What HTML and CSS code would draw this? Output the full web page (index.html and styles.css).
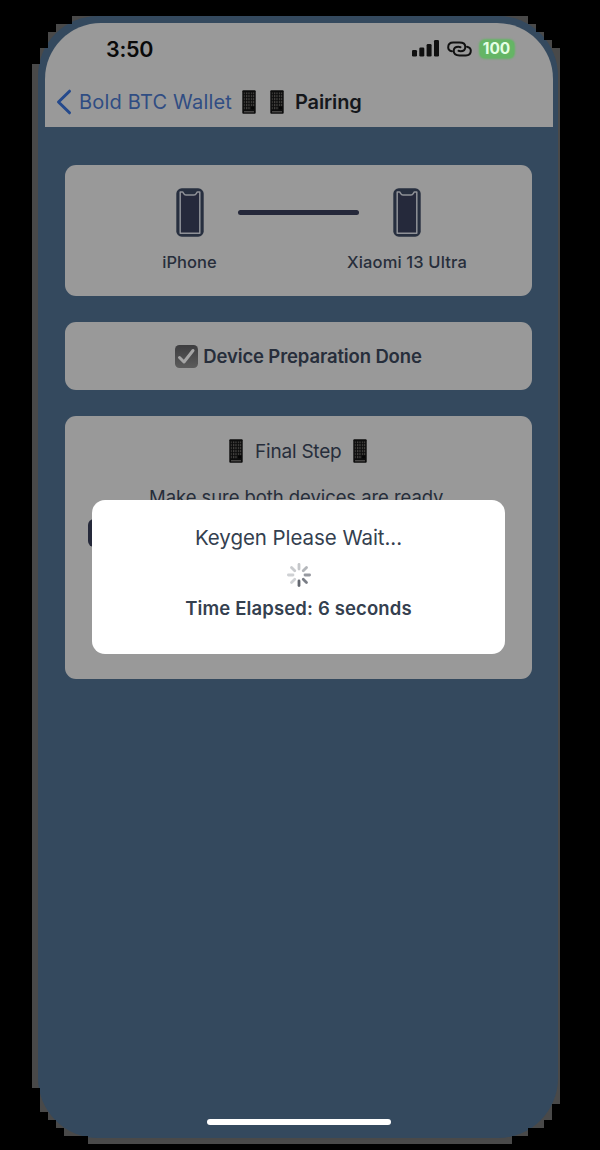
FILE: index.html
```html
<!DOCTYPE html>
<html lang="en">
<head>
<meta charset="utf-8">
<title>Pairing</title>
<link rel="stylesheet" href="styles.css">
</head>
<body>
<svg class="defs" width="0" height="0">
  <defs>
    <pattern id="keys" width="2.4" height="3" patternUnits="userSpaceOnUse" x="1.6" y="2.4">
      <rect width="1.2" height="1.4" fill="#666360"/>
    </pattern>
    <symbol id="keypad" viewBox="0 0 14 24">
      <rect x=".3" y=".3" width="13.4" height="23.4" rx="1" fill="#0c0c0c"/>
      <rect x="1.6" y="2.4" width="10.8" height="17.5" fill="url(#keys)"/>
      <rect x="9" y="16.5" width="3.6" height="3" fill="#050505"/>
      <path d="M2 21.8h10" stroke="#62605e" stroke-width="1"/>
    </symbol>
    <symbol id="phone" viewBox="0 0 28 49">
      <rect x=".3" y=".3" width="27.4" height="48.400" rx="5.500" fill="#272f3f"/>
      <path d="M6.400 4H4.200V45.200H23.800V4H21.600C20.400 4 20.600 7 18 7H10C7.400 7 7.600 4 6.400 4Z" fill="#25293b" stroke="#8f9197" stroke-width="1.500" stroke-linejoin="round"/>
    </symbol>
  </defs>
</svg>
<div class="backdrop">
  <div class="device">
    <div class="top">
      <div class="status">
        <span class="time">3:50</span>
        <svg class="signal" width="27" height="17" viewBox="0 0 27 17"><rect x="0" y="10" width="5" height="6.500" rx="1.300"/><rect x="7.300" y="7.500" width="5" height="9" rx="1.300"/><rect x="14.600" y="4" width="5" height="12.500" rx="1.300"/><rect x="22" y="0" width="5" height="16.500" rx="1.300"/></svg>
        <svg class="link" width="25" height="16" viewBox="0 0 25 16" fill="none" stroke="#111" stroke-width="2" stroke-linecap="round"><path d="M5 10.300C2.500 9.800 1.200 8.300 1.200 6.200C1.200 3.300 3.300 1.500 6.200 1.500H12.500C16 1.500 18.300 3.300 18.300 5.900C18.300 8.500 16.300 10.200 13.500 10.200C12.700 10.200 12 10 11.500 9.800"/><path d="M20 5.700C22.500 6.200 23.800 7.700 23.800 9.800C23.800 12.700 21.700 14.500 18.800 14.500H12.500C9 14.500 6.700 12.700 6.700 10.100C6.700 7.500 8.700 5.800 11.500 5.800C12.300 5.800 13 6 13.500 6.200"/></svg>
        <span class="battery">100</span>
      </div>
      <div class="nav">
        <svg class="back" width="16" height="26" viewBox="0 0 16 26"><path d="M13.500 2.200L2.500 13L13.500 23.800" fill="none" stroke="#24498c" stroke-width="3" stroke-linecap="round" stroke-linejoin="round"/></svg>
        <span class="backtext">Bold BTC Wallet</span>
        <svg class="pad" width="14" height="24"><use href="#keypad"/></svg>
        <svg class="pad second" width="14" height="24"><use href="#keypad"/></svg>
        <span class="title">Pairing</span>
      </div>
    </div>
    <div class="content">
      <div class="card devices">
        <div class="dev"><svg width="28" height="49"><use href="#phone"/></svg><span>iPhone</span></div>
        <div class="line"></div>
        <div class="dev"><svg width="28" height="49"><use href="#phone"/></svg><span class="peer">Xiaomi 13 Ultra</span></div>
      </div>
      <div class="card prep">
        <svg width="23" height="23" viewBox="0 0 23 23"><defs><linearGradient id="chk" x2="0" y2="1"><stop offset="0" stop-color="#3d3d3f"/><stop offset="1" stop-color="#5c5c5c"/></linearGradient></defs><rect width="23" height="23" rx="4.500" fill="url(#chk)"/><path d="M4.500 12.500L9 17L18 5.500" fill="none" stroke="#a5a5a5" stroke-width="3" stroke-linecap="round" stroke-linejoin="round"/></svg>
        <span class="preptext">Device Preparation Done</span>
      </div>
      <div class="card final">
        <div class="step">
          <svg width="14" height="24"><use href="#keypad"/></svg>
          <span class="steptext">Final Step</span>
          <svg width="14" height="24"><use href="#keypad"/></svg>
        </div>
        <p class="ready">Make sure both devices are ready</p>
        <div class="checkbox"></div>
      </div>
    </div>
    <div class="modal">
      <span class="wait">Keygen Please Wait...</span>
      <svg class="spinner" width="26" height="26" viewBox="-13 -13 26 26" stroke-width="2.800" stroke-linecap="round"><path d="M0-6V-10.600" stroke="#c5c7ca"/><path d="M0-6V-10.600" stroke="#b3b6ba" transform="rotate(45)"/><path d="M0-6V-10.600" stroke="#9699a0" transform="rotate(90)"/><path d="M0-6V-10.600" stroke="#7a7e86" transform="rotate(135)"/><path d="M0-6V-10.600" stroke="#63676f" transform="rotate(180)"/><path d="M0-6V-10.600" stroke="#d0d2d5" transform="rotate(225)"/><path d="M0-6V-10.600" stroke="#cfd1d4" transform="rotate(270)"/><path d="M0-6V-10.600" stroke="#c9cbce" transform="rotate(315)"/></svg>
      <span class="elapsed">Time Elapsed: 6 seconds</span>
    </div>
    <div class="home"></div>
  </div>
</div>
</body>
</html>
```
FILE: styles.css
```css
* { box-sizing: border-box; }
body { margin: 0; background: #000; font-family: Inter, "Liberation Sans", sans-serif; color: #272e3b; overflow: hidden; }
.defs { position: absolute; }
svg { display: block; flex: none; }
span, p { white-space: nowrap; }
.backdrop {
  width: 600px; height: 1150px; padding: 16px 42px 12px 38px; background: #494949;
  clip-path: polygon(72px 16px, 528px 16px, 528px 24px, 536px 24px, 536px 32px, 544px 32px, 544px 40px, 552px 40px, 552px 48px, 560px 48px, 560px 1104px, 552px 1104px, 552px 1120px, 544px 1120px, 544px 1128px, 528px 1128px, 528px 1136px, 512px 1136px, 512px 1144px, 88px 1144px, 88px 1136px, 64px 1136px, 64px 1128px, 56px 1128px, 56px 1120px, 48px 1120px, 48px 1112px, 40px 1112px, 40px 1088px, 32px 1088px, 32px 64px, 40px 64px, 40px 48px, 48px 48px, 48px 32px, 56px 32px, 56px 24px, 72px 24px);
}
.device { position: relative; height: 1122px; padding: 6.500px 5.500px 0 6.500px; background: #34495e; border-radius: 60px; }
.top { height: 104.500px; background: #999; border-radius: 56px 56px 0 0; }
.status { display: flex; align-items: center; height: 52px; padding-left: 61.500px; }
.time { width: 306px; font-size: 21.500px; font-weight: 600; color: #0a0a0a; letter-spacing: -.25px; }
.signal { fill: #111; }
.link { margin-left: 7.500px; }
.battery { width: 34px; height: 18px; margin-left: 8px; border-radius: 5px; background: #65b565; box-shadow: 0 0 2px 1px #65b565; color: #e4ffe4; font-size: 15.500px; line-height: 18px; font-weight: 700; text-align: center; }
.nav { display: flex; align-items: center; height: 52px; padding: 2px 0 0 11px; }
.backtext { width: 155px; margin-left: 7.500px; font-size: 20px; letter-spacing: .2px; color: #304d83; }
.pad { margin-left: 7.500px; }
.second { margin-left: 14px; }
.title { margin-left: 11.500px; font-size: 20px; letter-spacing: -.12px; font-weight: 600; color: #15171b; }
.content { display: flex; flex-direction: column; gap: 26px; padding: 38px 21px 0 20.500px; }
.card { background: #999; border-radius: 11px; }
.devices { display: flex; height: 131px; padding: 23px 16px 0; }
.dev { display: flex; flex-direction: column; align-items: center; width: 96px; }
.dev:first-child { padding-left: 60px; width: 157px; }
.dev span { margin-top: 14px; font-size: 16.500px; line-height: 22px; font-weight: 500; }
.peer { letter-spacing: .15px; }
.line { width: 121px; height: 5px; margin-top: 22px; border-radius: 3px; background: #25283a; }
.prep { display: flex; align-items: center; justify-content: center; gap: 5.500px; height: 68px; }
.preptext { font-size: 18.500px; font-weight: 600; letter-spacing: -.13px; }
.final { height: 262.500px; padding-top: 23px; }
.step { display: flex; justify-content: center; align-items: center; gap: 12px; height: 24px; }
.steptext { font-size: 19px; letter-spacing: -.22px; }
.ready { margin: 20.500px 0 0; padding-right: 4px; font-size: 18.500px; letter-spacing: -.07px; line-height: 26px; text-align: center; }
.checkbox { width: 28px; height: 28px; margin: 9px 0 0 23px; border-radius: 6px; background: #25293a; }
.modal { position: absolute; left: 54px; top: 484px; width: 413px; height: 153.500px; padding-top: 24px; border-radius: 13px; background: #fff; display: flex; flex-direction: column; align-items: center; color: #34404f; }
.wait { font-size: 20.500px; letter-spacing: -.06px; line-height: 28px; }
.spinner { margin-top: 9.500px; }
.elapsed { margin-top: 7.500px; font-size: 18.500px; letter-spacing: .14px; line-height: 26px; font-weight: 600; }
.home { position: absolute; left: 169px; top: 1103px; width: 184px; height: 6px; border-radius: 3px; background: #fff; }
```
